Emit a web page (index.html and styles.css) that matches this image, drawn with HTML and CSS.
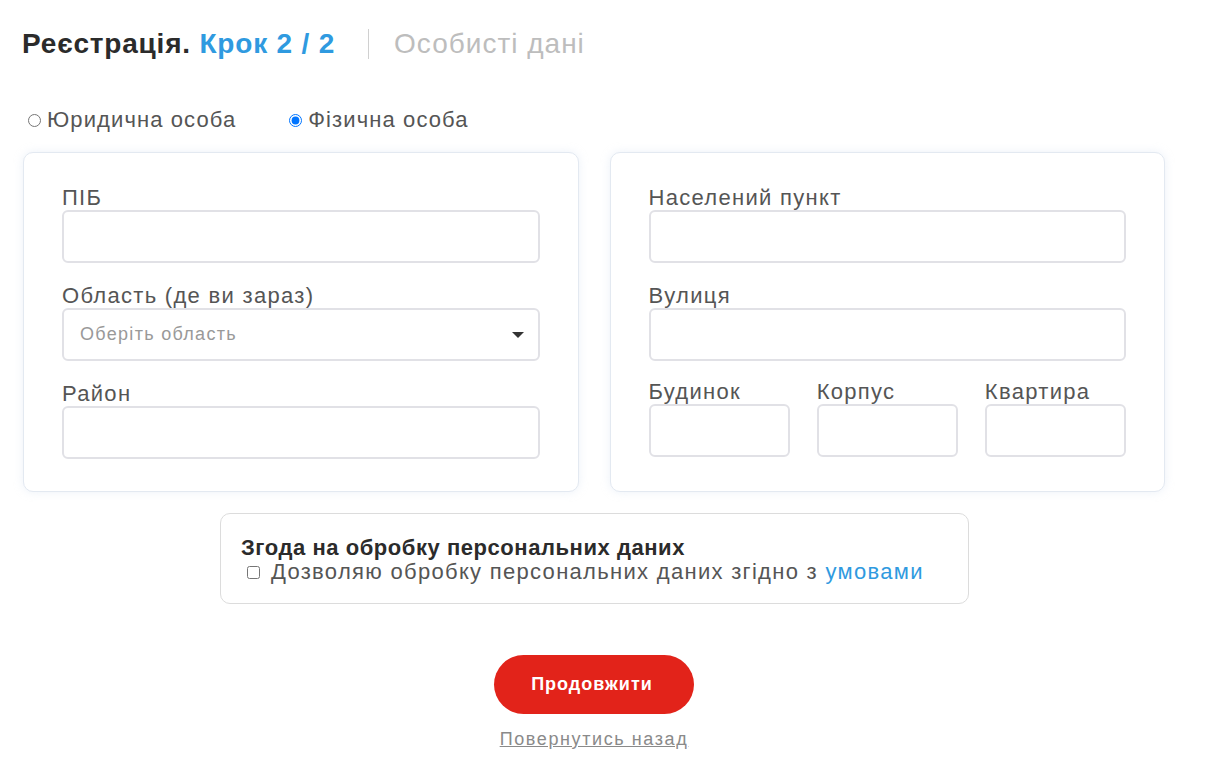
FILE: index.html
```html
<!DOCTYPE html>
<html lang="uk">
<head>
<meta charset="utf-8">
<title>Реєстрація</title>
<link rel="stylesheet" href="styles.css">
</head>
<body>
<div class="page">
  <div class="title-row">
    <h1 class="title">Реєстрація. <span class="step">Крок 2 / 2</span></h1>
    <span class="divider"></span>
    <span class="subtitle">Особисті дані</span>
  </div>

  <div class="type-row">
    <label class="radio"><input type="radio" name="type">Юридична особа</label>
    <label class="radio"><input type="radio" name="type" checked>Фізична особа</label>
  </div>

  <div class="cards">
    <div class="card">
      <div class="field">
        <label class="lbl">ПІБ</label>
        <input class="inp" type="text">
      </div>
      <div class="field">
        <label class="lbl">Область (де ви зараз)</label>
        <div class="select">
          <span class="placeholder">Оберіть область</span>
          <span class="caret"></span>
        </div>
      </div>
      <div class="field">
        <label class="lbl">Район</label>
        <input class="inp" type="text">
      </div>
    </div>
    <div class="card">
      <div class="field">
        <label class="lbl">Населений пункт</label>
        <input class="inp" type="text">
      </div>
      <div class="field">
        <label class="lbl">Вулиця</label>
        <input class="inp" type="text">
      </div>
      <div class="triple">
        <div class="field">
          <label class="lbl">Будинок</label>
          <input class="inp" type="text">
        </div>
        <div class="field">
          <label class="lbl">Корпус</label>
          <input class="inp" type="text">
        </div>
        <div class="field">
          <label class="lbl">Квартира</label>
          <input class="inp" type="text">
        </div>
      </div>
    </div>
  </div>

  <div class="consent">
    <div class="consent-title">Згода на обробку персональних даних</div>
    <label class="consent-check"><input type="checkbox">Дозволяю обробку персональних даних згідно з&nbsp;<a href="#" class="link">умовами</a></label>
  </div>

  <div class="actions">
    <button class="btn" type="button">Продовжити</button>
    <a href="#" class="back">Повернутись назад</a>
  </div>
</div>
</body>
</html>
```

FILE: styles.css
```css
* { box-sizing: border-box; }
html, body { margin: 0; padding: 0; background: #fff; }
body {
  font-family: "Liberation Sans", Arial, sans-serif;
  color: #555;
}
.page {
  width: 1209px;
  padding: 22px 0 0 22px;
}
.title-row {
  display: flex;
  align-items: center;
  height: 44px;
}
.title {
  margin: 0;
  font-size: 28px;
  font-weight: 700;
  color: #2b2b2b;
  letter-spacing: 0.8px;
}
.step { color: #2f9ae0; }
.divider {
  width: 1px;
  height: 30px;
  background: #d0d0d0;
  margin: 0 25px 0 33px;
}
.subtitle {
  font-size: 28px;
  color: #bdbdbd;
  letter-spacing: 1px;
}
.type-row {
  display: flex;
  gap: 52px;
  margin-top: 39px;
  padding-left: 5px;
  height: 30px;
  align-items: center;
}
.radio {
  display: flex;
  align-items: center;
  font-size: 22px;
  color: #555;
  letter-spacing: 1.1px;
}
.radio input {
  margin: 0 6px 0 1px;
  width: 13px;
  height: 13px;
}
.cards {
  display: flex;
  gap: 31px;
  margin-top: 17px;
  margin-left: 1px;
  width: 1142px;
}
.card {
  flex: 1;
  border: 1px solid #e3e9f1;
  border-radius: 10px;
  box-shadow: 0 0 10px rgba(200, 215, 235, 0.35);
  padding: 33px 38px 32px;
  display: flex;
  flex-direction: column;
  gap: 21px;
  background: #fff;
}
.field {
  display: flex;
  flex-direction: column;
}
.lbl {
  font-size: 22px;
  line-height: 24px;
  color: #555;
  letter-spacing: 1.3px;
}
.inp, .select {
  height: 53px;
  border: 2px solid #e1e1e6;
  border-radius: 6px;
  background: #fff;
  width: 100%;
}
.select {
  display: flex;
  align-items: center;
  justify-content: space-between;
  padding: 0 14px 0 16px;
}
.placeholder {
  font-size: 18px;
  color: #999;
  letter-spacing: 1.3px;
}
.caret {
  width: 0;
  height: 0;
  border-left: 6px solid transparent;
  border-right: 6px solid transparent;
  border-top: 6px solid #333;
}
.triple {
  display: grid;
  grid-template-columns: repeat(3, 1fr);
  gap: 27px;
  margin-top: -2px;
}
.consent {
  width: 749px;
  margin: 21px 0 0 198px;
  border: 1px solid #dcdcdc;
  border-radius: 10px;
  padding: 22px 20px 19px;
}
.consent-title {
  font-size: 22px;
  font-weight: 700;
  color: #2b2b2b;
  line-height: 24px;
  letter-spacing: 0.55px;
}
.consent-check {
  display: flex;
  align-items: center;
  font-size: 22px;
  color: #555;
  line-height: 24px;
  letter-spacing: 1.3px;
}
.consent-check input {
  margin: 0 11px 0 6px;
  width: 13px;
  height: 13px;
}
.link { color: #2f9ae0; text-decoration: none; }
.actions {
  display: flex;
  flex-direction: column;
  align-items: center;
  width: 1144px;
  margin-top: 51px;
}
.btn {
  width: 200px;
  height: 59px;
  border: none;
  border-radius: 30px;
  background: #e2231a;
  color: #fff;
  font-family: "Liberation Sans", Arial, sans-serif;
  font-size: 18px;
  font-weight: 700;
  letter-spacing: 1px;
  padding-left: 2px;
}
.back {
  margin-top: 15px;
  font-size: 18px;
  line-height: 20px;
  color: #8a8a8a;
  text-decoration: underline;
  letter-spacing: 1.6px;
}
```
